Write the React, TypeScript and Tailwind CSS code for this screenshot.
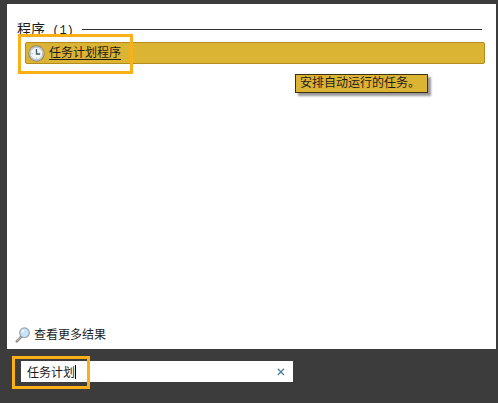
import React, { useState } from 'react';

function ClockIcon() {
  return (
    <svg width="17" height="17" viewBox="0 0 17 17" className="shrink-0" aria-hidden="true">
      <circle cx="8.5" cy="8.5" r="8.2" fill="#8b8775" />
      <circle cx="8.5" cy="8.5" r="7.3" fill="#c9cbc9" />
      <circle cx="8.5" cy="8.5" r="6.2" fill="#f1f5f7" stroke="#a3a9ae" strokeWidth="0.6" />
      <path d="M8.5 4V9H12.2" fill="none" stroke="#42536a" strokeWidth="1.3" />
      <path d="M3.6 8.5h1M8.5 12.6v1" stroke="#98a1aa" strokeWidth="0.8" />
    </svg>
  );
}

function MagnifierIcon() {
  return (
    <svg width="16" height="16" viewBox="0 0 16 16" className="shrink-0" aria-hidden="true">
      <path d="M6.3 9.7L1.8 14.3" stroke="#8f8987" strokeWidth="2.6" strokeLinecap="round" />
      <path d="M5.9 9.8L2 13.8" stroke="#c9c4c1" strokeWidth="1" strokeLinecap="round" />
      <circle cx="9.5" cy="5.7" r="4.8" fill="#c5e5f6" stroke="#95a3ae" strokeWidth="1.2" />
      <path d="M6.4 5.8A3.2 3.2 0 0 1 9.7 2.5C9 4.4 8.2 5.4 6.4 5.8Z" fill="#f2fbff" />
    </svg>
  );
}

export default function App() {
  const [query, setQuery] = useState('任务计划');

  return (
    <div className="min-h-screen flex flex-col bg-[#3c3c3c] pt-1 pl-[7px] pr-[2px] text-xs text-[#1c1c1c] font-['Liberation_Sans','Noto_Sans_CJK_SC',sans-serif]">
      <main className="flex-1 flex flex-col bg-white">
        <div className="flex items-center gap-2 pt-4 pl-[10px] pr-[14px]">
          <h1 className="h-[18px] text-sm leading-[18px] whitespace-nowrap">
            程序<span className="text-xs leading-none font-['Liberation_Mono',monospace]"> (1)</span>
          </h1>
          <div className="flex-1 h-px bg-[#333333]" />
        </div>

        <div className="relative ml-[18px] mr-[11px] mt-1">
          <a href="#task-scheduler" className="flex items-center gap-1 h-[22px] pl-[2px] rounded-xs border border-[#b58b1c] bg-[#dcb433]">
            <ClockIcon />
            <span className="underline underline-offset-2">任务计划程序</span>
          </a>
          <div className="absolute -left-[7px] -top-2 w-[115px] h-10 border-3 border-[#fcb018] pointer-events-none" />
          <div role="tooltip" className="absolute left-[270px] top-8 w-[133px] h-[19px] pl-1 leading-[17px] whitespace-nowrap border border-[#3b3012] bg-[#dcb433] shadow-[3px_3px_2px_#999999]">
            安排自动运行的任务。
          </div>
        </div>

        <a href="#more" className="mt-auto mb-[6px] ml-2 flex items-center gap-[3px] self-start h-4">
          <MagnifierIcon />
          <span>查看更多结果</span>
        </a>
      </main>

      <footer className="h-[54px] pt-3 pl-[14px]">
        <div className="relative flex items-center w-[272px] h-[21px] bg-white">
          <input
            type="text"
            aria-label="搜索"
            value={query}
            onChange={e => setQuery(e.target.value)}
            className="flex-1 min-w-0 h-full pl-[6px] outline-none caret-transparent"
          />
          <button type="button" aria-label="清除" onClick={() => setQuery('')} className="w-6 h-full flex items-center justify-center">
            <svg width="8" height="8" viewBox="0 0 8 8" aria-hidden="true">
              <path d="M0.8 0.8L7 7M7 0.8L0.8 7" stroke="#4f7f9f" strokeWidth="1.3" />
            </svg>
          </button>
          {query && <div className="absolute left-[54px] top-1 w-px h-[14px] bg-black" />}
          <div className="absolute -left-[9px] -top-[5px] w-[78px] h-[33px] border-3 border-[#fcb018] pointer-events-none" />
        </div>
      </footer>
    </div>
  );
}
